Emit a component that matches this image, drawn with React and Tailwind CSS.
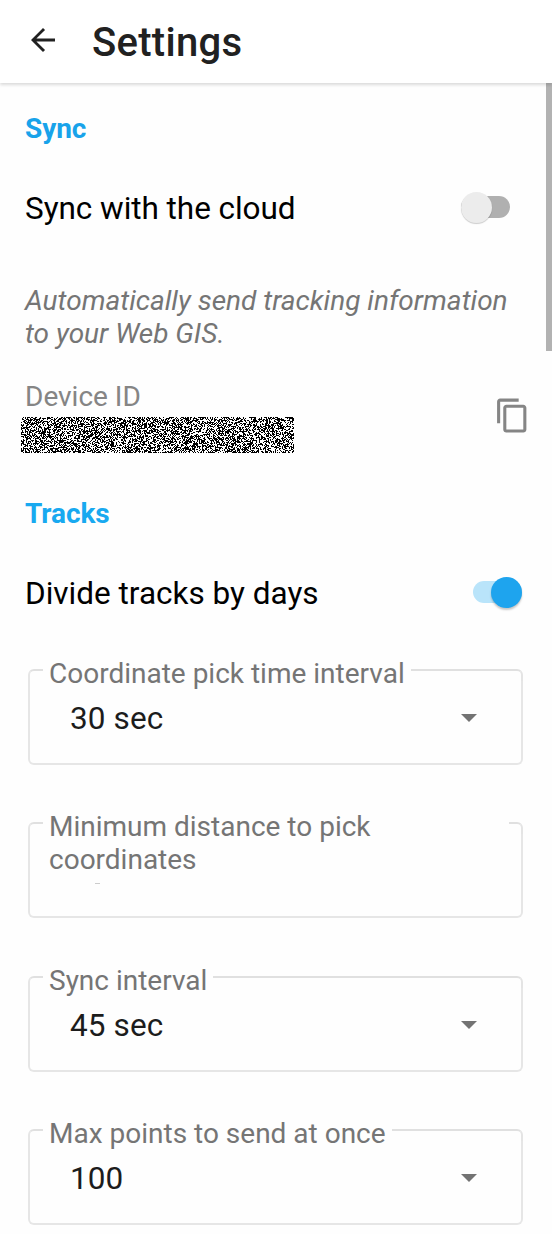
import React from "react";

// One-pixel black cells from a small seeded generator, joined into one path.
function noisePath(width, height) {
  let seed = 48271;
  let d = "";
  for (let y = 0; y < height; y++) {
    for (let x = 0; x < width; x++) {
      seed ^= seed << 13;
      seed ^= seed >>> 17;
      seed ^= seed << 5;
      if (seed & 64) d += `M${x} ${y}h1v1h-1z`;
    }
  }
  return d;
}

const NOISE = noisePath(273, 36);

function BackIcon() {
  return (
    <svg className="mb-[3px] h-9 w-9" viewBox="0 0 24 24" fill="#212121">
      <path d="M20 11.05H7.6l5.75-5.75L12 4l-8 8 8 8 1.35-1.35L7.6 12.95H20z" />
    </svg>
  );
}

function CopyIcon() {
  return (
    <svg className="mb-[2px] h-[37px] w-[37px]" viewBox="0 0 24 24" fill="#858585">
      <path d="M16 1H4c-1.1 0-2 .9-2 2v14h2V3h12V1zm3 4H8c-1.1 0-2 .9-2 2v14c0 1.1.9 2 2 2h11c1.1 0 2-.9 2-2V7c0-1.1-.9-2-2-2zm0 16H8V7h11v14z" />
    </svg>
  );
}

function Switch({ on }) {
  return on ? (
    <div className="flex h-[22px] w-[49px] items-center justify-end rounded-full bg-[#b9e4fa]">
      <div className="h-[31px] w-[31px] shrink-0 rounded-full bg-[#1ea4ee] shadow-[0_2px_2px_rgba(0,0,0,0.22)]" />
    </div>
  ) : (
    <div className="mb-[2px] flex h-[22px] w-[49px] items-center rounded-full bg-[#b0b0b0]">
      <div className="h-[31px] w-[31px] shrink-0 rounded-full bg-[#ececec] shadow-[0_1px_1px_rgba(0,0,0,0.2)]" />
    </div>
  );
}

function Field({ label, value, wide }) {
  return (
    <div className="flex h-[96px] w-[495px] flex-col">
      <div className="flex h-3 shrink-0 items-start">
        <div className="h-3 w-[15px] shrink-0 rounded-tl-[6px] border-t-2 border-l-2 border-t-[#e0e0e0] border-l-[#e6e6e6]" />
        <div
          className={
            wide
              ? "-mt-3 w-[466px] pr-[100px] pl-[6px] text-[28px] leading-[33px] text-[#757575]"
              : "-mt-3 shrink-0 px-[6px] text-[28px] leading-[33px] whitespace-nowrap text-[#757575]"
          }
        >
          {label}
        </div>
        <div className="h-3 min-w-[14px] flex-1 rounded-tr-[6px] border-t-2 border-r-2 border-t-[#e0e0e0] border-r-[#e4e4e4]" />
      </div>
      <div className="flex flex-1 items-start justify-between rounded-b-[6px] border-x-2 border-b-2 border-[#e6e6e6] pr-11 pl-10">
        {wide ? (
          <div className="mt-[49px] ml-[25px] h-px w-[5px] bg-[#cccccc]" />
        ) : (
          <>
            <div className="mt-[20px] text-[31.5px] leading-[36px] tracking-[0.1px] text-[#1c1c1c]">{value}</div>
            <svg className="mt-[33px] h-2 w-4" viewBox="0 0 16 8" fill="#737373">
              <path d="M0 0h16L8 8z" />
            </svg>
          </>
        )}
      </div>
    </div>
  );
}

export default function App() {
  return (
    <div className="flex h-[1234px] w-[552px] flex-col overflow-hidden bg-white font-['Roboto',sans-serif]">
      <header className="z-10 flex h-[83px] shrink-0 items-center gap-[31px] bg-white pl-[25px] shadow-[0_2px_3px_rgba(0,0,0,0.14)]">
        <BackIcon />
        <h1 className="mt-[2px] text-[40px] leading-[46px] font-medium tracking-[0.3px] text-[#212121]">Settings</h1>
      </header>
      <div className="flex min-h-0 flex-1 bg-[#fefefe]">
        <main className="flex w-[546px] shrink-0 flex-col">
          <h2 className="mt-[29px] ml-[25px] text-[28px] leading-[33px] font-bold tracking-[-0.1px] text-[#18a3ea]">Sync</h2>
          <div className="mt-[44px] ml-[25px] flex h-[38px] w-[485px] items-center justify-between">
            <span className="mt-[2px] text-[31.5px] leading-[38px] tracking-[-0.05px] text-black">Sync with the cloud</span>
            <Switch on={false} />
          </div>
          <p className="mt-[57px] ml-[25px] text-[28px] leading-[33px] whitespace-nowrap text-[#757575] italic">
            Automatically send tracking information
            <br />
            to your Web GIS.
          </p>
          <div className="mt-[30px] ml-[21px] flex h-[73px] w-[510px] items-center justify-between">
            <div className="flex flex-col">
              <span className="ml-1 text-[28px] leading-[33px] text-[#858585]">Device ID</span>
              <svg className="mt-1 h-9 w-[273px] bg-white" viewBox="0 0 273 36" shapeRendering="crispEdges">
                <path d={NOISE} fill="#000" />
              </svg>
            </div>
            <CopyIcon />
          </div>
          <h2 className="mt-[44px] ml-[25px] text-[28px] leading-[33px] font-bold tracking-[-0.1px] text-[#18a9f0]">Tracks</h2>
          <div className="mt-[43px] ml-[25px] flex h-[38px] w-[497px] items-center justify-between">
            <span className="mt-[3px] text-[31.5px] leading-[38px] text-black">Divide tracks by days</span>
            <Switch on />
          </div>
          <div className="mt-[58px] ml-[28px] flex flex-col gap-[57.4px]">
            <Field label="Coordinate pick time interval" value="30 sec" />
            <Field label="Minimum distance to pick coordinates" wide />
            <Field label="Sync interval" value="45 sec" />
            <Field label="Max points to send at once" value="100" />
          </div>
        </main>
        <div className="h-[268px] w-1.5 bg-[#b2b2b2]" />
      </div>
    </div>
  );
}
